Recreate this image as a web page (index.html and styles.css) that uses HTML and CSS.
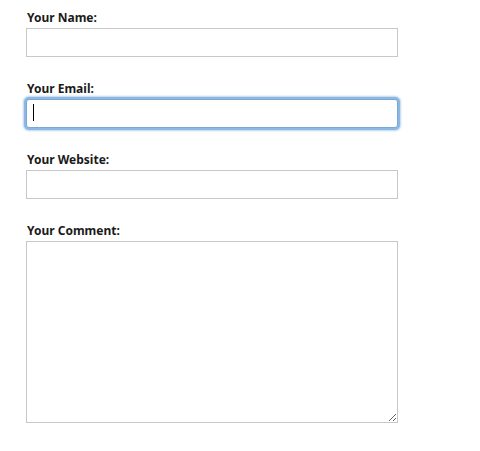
FILE: index.html
```html
<!DOCTYPE html>
<html>
<head>
<meta charset="utf-8">
<link rel="stylesheet" href="styles.css">
</head>
<body>
<form class="form">
  <div class="field">
    <label class="label" for="name">Your Name:</label>
    <input class="input" id="name" type="text">
  </div>
  <div class="field">
    <label class="label" for="email">Your Email:</label>
    <div class="input-wrap">
      <input class="input input-focus" id="email" type="text">
      <span class="caret"></span>
    </div>
  </div>
  <div class="field">
    <label class="label" for="website">Your Website:</label>
    <input class="input" id="website" type="text">
  </div>
  <div class="field">
    <label class="label" for="comment">Your Comment:</label>
    <textarea class="textarea" id="comment"></textarea>
  </div>
</form>
</body>
</html>
```
FILE: styles.css
```css
html, body {
  margin: 0;
  padding: 0;
  background: #fff;
}
.form {
  display: flex;
  flex-direction: column;
  gap: 24px;
  padding: 10px 0 0 26px;
  font-family: "Noto Sans", "DejaVu Sans", sans-serif;
}
.field {
  display: flex;
  flex-direction: column;
  gap: 2px;
}
.label {
  display: block;
  font-size: 12px;
  font-weight: bold;
  line-height: 16px;
  color: #1a1a1a;
  padding-left: 1px;
}
.input-wrap {
  position: relative;
  width: 372px;
  height: 29px;
}
.input {
  box-sizing: border-box;
  width: 372px;
  height: 29px;
  margin: 0;
  border: 1px solid #c8c8c8;
  background: #fff;
  outline: none;
  padding: 0 6px;
  font-family: inherit;
  font-size: 12px;
}
.input-focus {
  border: 1px solid #79a8d8;
  border-radius: 3px;
  box-shadow: 0 0 0 2px #8db8e2, 0 0 2px 3px rgba(140, 184, 226, 0.6);
}
.caret {
  position: absolute;
  left: 7px;
  top: 5px;
  width: 1px;
  height: 17px;
  background: #000;
}
.textarea {
  box-sizing: border-box;
  width: 372px;
  height: 182px;
  margin: 0;
  border: 1px solid #c8c8c8;
  background: #fff;
  outline: none;
  resize: both;
  font-family: inherit;
  font-size: 12px;
  padding: 4px;
}
```
